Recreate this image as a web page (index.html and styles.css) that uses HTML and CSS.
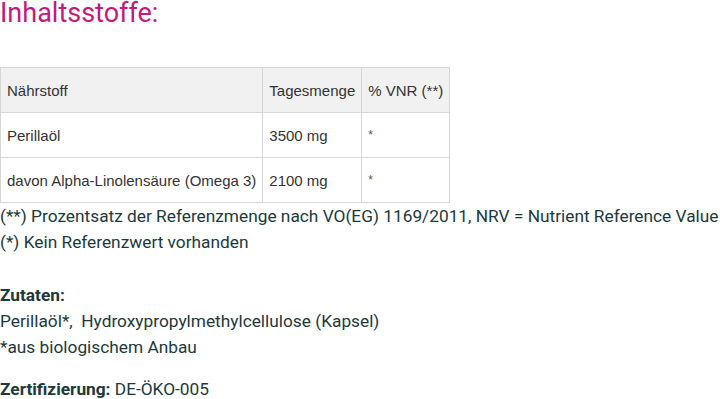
FILE: index.html
```html
<!DOCTYPE html>
<html lang="de">
<head>
    <meta charset="UTF-8">
    <meta name="viewport" content="width=device-width, initial-scale=1.0">
    <title>Inhaltsstoffe</title>
    <link rel="stylesheet" href="styles.css">
</head>
<body>
    <div class="product-info">
        <h2 class="title">Inhaltsstoffe:</h2>

        <table class="nutrients">
            <tr>
                <th>Nährstoff</th>
                <th>Tagesmenge</th>
                <th>% VNR (**)</th>
            </tr>
            <tr>
                <td>Perillaöl</td>
                <td>3500 mg</td>
                <td class="star">*</td>
            </tr>
            <tr>
                <td>davon Alpha-Linolensäure (Omega 3)</td>
                <td>2100 mg</td>
                <td class="star">*</td>
            </tr>
        </table>

        <p class="notes">
            (**) Prozentsatz der Referenzmenge nach VO(EG) 1169/2011, NRV = Nutrient Reference Value<br>
            (*) Kein Referenzwert vorhanden<br>
            <br>
            <strong>Zutaten:</strong><br>
            Perillaöl*,&nbsp; Hydroxypropylmethylcellulose (Kapsel)<br>
            *aus biologischem Anbau
        </p>

        <p class="notes"><strong>Zertifizierung:</strong> DE-ÖKO-005</p>
    </div>
</body>
</html>
```

FILE: styles.css
```css
body {
    margin: 0;
    background-color: #ffffff;
    font-family: Roboto, "Liberation Sans", sans-serif;
    color: #1c3a3b;
}
.product-info {
    width: 720px;
}
.title {
    margin: -3px 0 0;
    font-size: 27px;
    font-weight: 400;
    line-height: 32px;
    color: #c21a7d;
}
.nutrients {
    margin-top: 38px;
    border-collapse: collapse;
    font-family: "Liberation Sans", Arial, sans-serif;
    font-size: 15px;
    color: #333333;
}
.nutrients th,
.nutrients td {
    height: 44px;
    padding: 0 6px;
    border: 1px solid #d6d6d6;
    text-align: left;
    font-weight: normal;
    white-space: nowrap;
}
.nutrients th {
    background-color: #f1f1f1;
}
.nutrients .star {
    font-size: 12px;
    color: #555555;
}
.notes {
    margin: 0 0 16px;
    font-size: 17.3px;
    line-height: 26.2px;
    white-space: nowrap;
}
.notes strong {
    font-weight: 700;
}
```
